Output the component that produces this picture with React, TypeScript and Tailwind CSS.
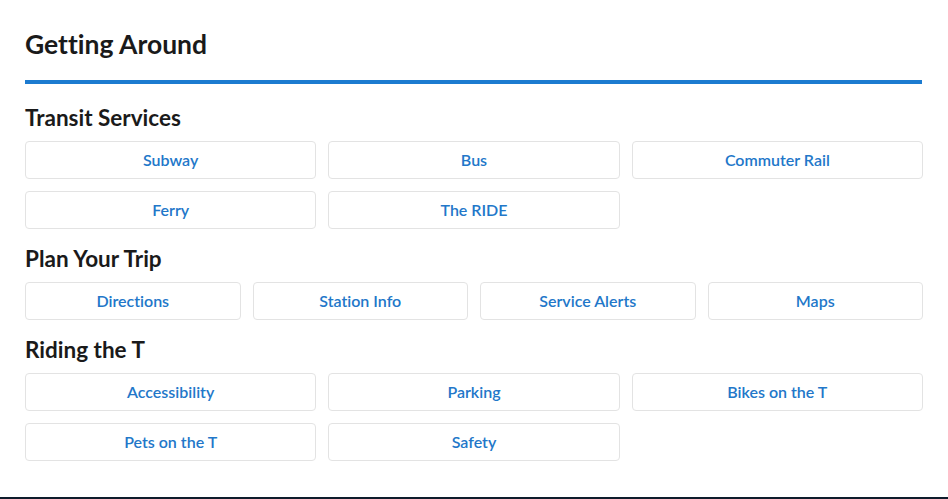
import React from "react";

const sections: { title: string; cols: string; links: string[] }[] = [
  {
    title: "Transit Services",
    cols: "grid-cols-3",
    links: ["Subway", "Bus", "Commuter Rail", "Ferry", "The RIDE"],
  },
  {
    title: "Plan Your Trip",
    cols: "grid-cols-4",
    links: ["Directions", "Station Info", "Service Alerts", "Maps"],
  },
  {
    title: "Riding the T",
    cols: "grid-cols-3",
    links: ["Accessibility", "Parking", "Bikes on the T", "Pets on the T", "Safety"],
  },
];

const App: React.FC = () => {
  return (
    <div className="w-[948px] h-[499px] bg-white flex flex-col font-['Lato','Liberation_Sans',sans-serif] [font-variant-ligatures:none] overflow-hidden">
      <div className="px-[25px] pt-[28px] w-[948px] flex-grow">
        <h1 className="text-[26.5px] leading-[32px] font-bold text-[#1a1a1a]">Getting Around</h1>
        <div className="mt-[20px] h-[4px] w-[897px] bg-[#1c7bd0]" />
        {sections.map((s, i) => (
          <section key={s.title} className={i === 0 ? "mt-[20px]" : "mt-[16px]"}>
            <h2 className="text-[22.5px] leading-[28px] font-bold text-[#1a1a1a]">{s.title}</h2>
            <div className={`grid ${s.cols} gap-x-[12px] gap-y-[12px] mt-[9px]`}>
              {s.links.map((l) => (
                <a
                  key={l}
                  href="#"
                  className="h-[38px] flex items-center justify-center border border-[#e3e3e3] rounded-[4px] text-[16px] font-semibold text-[#2277c9]"
                >
                  {l}
                </a>
              ))}
            </div>
          </section>
        ))}
      </div>
      <div className="h-[2px] bg-[#0e1c2b]" />
    </div>
  );
};

export default App;
